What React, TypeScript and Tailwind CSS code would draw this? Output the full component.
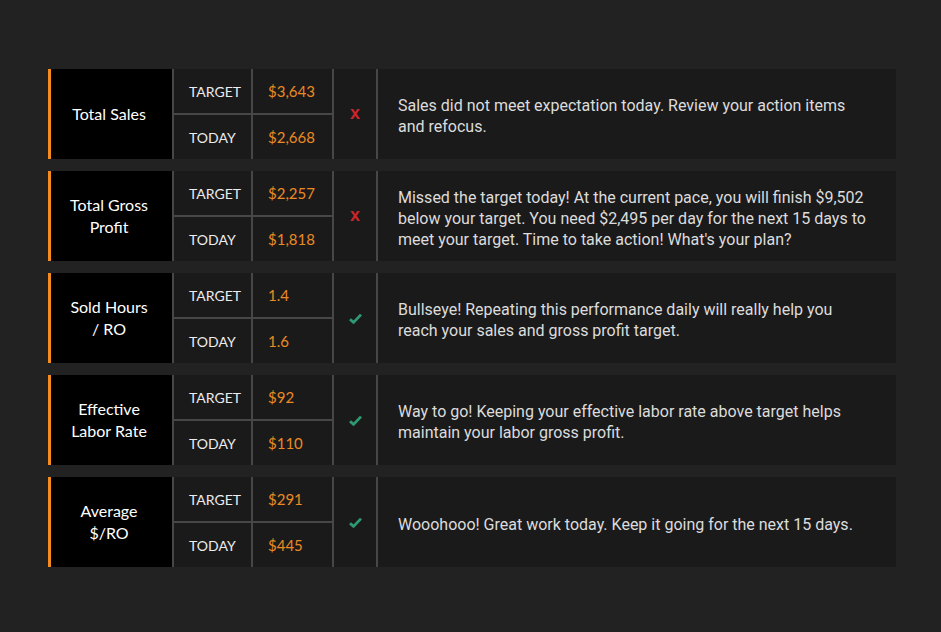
import React from "react";

type Row = {
  label: string[];
  target: string;
  today: string;
  ok: boolean;
  msg: string;
};

const rows: Row[] = [
  {
    label: ["Total Sales"],
    target: "$3,643",
    today: "$2,668",
    ok: false,
    msg: "Sales did not meet expectation today. Review your action items and refocus.",
  },
  {
    label: ["Total Gross", "Profit"],
    target: "$2,257",
    today: "$1,818",
    ok: false,
    msg: "Missed the target today! At the current pace, you will finish $9,502 below your target. You need $2,495 per day for the next 15 days to meet your target. Time to take action! What's your plan?",
  },
  {
    label: ["Sold Hours", "/ RO"],
    target: "1.4",
    today: "1.6",
    ok: true,
    msg: "Bullseye! Repeating this performance daily will really help you reach your sales and gross profit target.",
  },
  {
    label: ["Effective", "Labor Rate"],
    target: "$92",
    today: "$110",
    ok: true,
    msg: "Way to go! Keeping your effective labor rate above target helps maintain your labor gross profit.",
  },
  {
    label: ["Average", "$/RO"],
    target: "$291",
    today: "$445",
    ok: true,
    msg: "Wooohooo! Great work today. Keep it going for the next 15 days.",
  },
];

function Check() {
  return (
    <svg width="13" height="11" viewBox="0 0 13 11">
      <path d="M1 6.2 L4.6 9.4 L12 1.6" fill="none" stroke="#2f9a72" strokeWidth="2.8" strokeLinejoin="round" />
    </svg>
  );
}

export default function App() {
  return (
    <div className="w-[941px] h-[632px] bg-[#222222] pt-[69px] pl-[48px]">
      <div className="w-[848px] flex flex-col gap-[12px]">
        {rows.map((r, i) => (
          <div key={i} className="flex h-[90px] bg-[#1b1a1b]">
            <div className="w-[3px] bg-[#f68b1f]" />
            <div
              className="w-[121px] bg-black flex flex-col items-center justify-center pr-[5px] text-white text-[16px] leading-[22px] text-center"
              style={{ fontFamily: "Lato, 'Open Sans', sans-serif" }}
            >
              {r.label.map((l, j) => (
                <div key={j}>{l}</div>
              ))}
            </div>
            <div className="w-[2px] bg-[#474747]" />
            <div className="w-[158px] flex flex-col" style={{ fontFamily: "Lato, 'Open Sans', sans-serif" }}>
              <div className="h-[44px] flex">
                <div className="w-[77px] flex items-center pl-[15px] text-[14px] text-[#ececec]">TARGET</div>
                <div className="w-[2px] bg-[#474747]" />
                <div className="flex-1 flex items-center pl-[15px] text-[15px] text-[#ea8a22]">{r.target}</div>
              </div>
              <div className="h-[2px] bg-[#474747]" />
              <div className="h-[44px] flex">
                <div className="w-[77px] flex items-center pl-[15px] text-[14px] text-[#ececec]">TODAY</div>
                <div className="w-[2px] bg-[#474747]" />
                <div className="flex-1 flex items-center pl-[15px] text-[15px] text-[#ea8a22]">{r.today}</div>
              </div>
            </div>
            <div className="w-[2px] bg-[#474747]" />
            <div className="w-[42px] flex items-center justify-center">
              {r.ok ? (
                <Check />
              ) : (
                <span
                  className="text-[#c9262b] text-[18px] font-bold leading-none -mt-[2px]"
                  style={{ fontFamily: "'Liberation Sans', Arial, sans-serif" }}
                >
                  x
                </span>
              )}
            </div>
            <div className="w-[2px] bg-[#474747]" />
            <div
              className="flex-1 flex items-center pl-[20px] pr-[27px] pt-[4px] text-[16px] leading-[21px] text-[#dcdcdc]"
              style={{ fontFamily: "Roboto, sans-serif" }}
            >
              {r.msg}
            </div>
          </div>
        ))}
      </div>
    </div>
  );
}
